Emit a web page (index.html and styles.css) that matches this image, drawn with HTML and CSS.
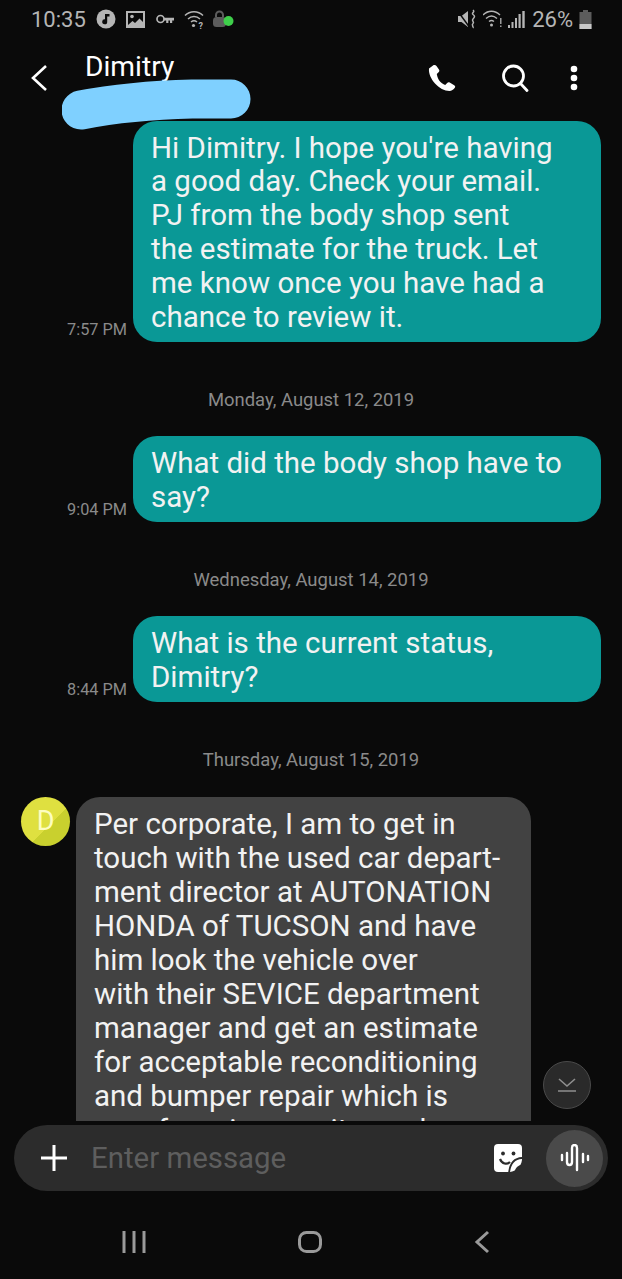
FILE: index.html
```html
<!DOCTYPE html>
<html lang="en">
  <head>
    <meta charset="UTF-8" />
    <meta name="viewport" content="width=device-width, initial-scale=1.0" />
    <title>Dimitry</title>
    <link rel="stylesheet" href="styles.css">
  </head>
  <body>
    <div class="phone">
      <div class="status-bar">
        <div class="status-left">
          <span class="clock">10:35</span>
          <svg width="20" height="20" viewBox="0 0 20 20"><circle cx="10" cy="10" r="9.500" fill="#b5b5b5"/><path d="M9 5h4.500v2.400h-2.300v5.300a2.500 2.500 0 1 1-2.200-2.400z" fill="#0a0a0a"/></svg>
          <svg width="19" height="19" viewBox="0 0 19 19"><path d="M0 1h19v17H0z" fill="#b5b5b5"/><path d="M2 3h15v9l-3.500-3.500-4.500 4.500-2.500-2L2 15z" fill="#0a0a0a"/><circle cx="6" cy="6.500" r="1.800" fill="#b5b5b5"/></svg>
          <svg class="key" width="18" height="11" viewBox="0 0 18 11"><circle cx="4.500" cy="5" r="3.500" fill="none" stroke="#b5b5b5" stroke-width="1.700"/><path d="M8 3.800h10v2.700h-1.800v2.400h-2.200V6.500h-1.600v2.400h-2.200V6.500H8z" fill="#b5b5b5"/></svg>
          <svg width="21" height="20" viewBox="0 0 21 20"><g fill="none" stroke="#b5b5b5" stroke-width="1.500"><path d="M1 6.500c5-5 13-5 18 0"/><path d="M4 10c3.400-3.200 8.600-3.200 12 0"/><path d="M7 13c1.700-1.400 4.300-1.400 6 0"/></g><circle cx="9.500" cy="16.500" r="1.600" fill="#b5b5b5"/><text x="14.500" y="19.500" class="wifi-q">?</text></svg>
          <svg class="lock" width="22" height="20" viewBox="0 0 22 20"><path d="M4 8V6a3.500 3.500 0 0 1 7 0v2" fill="none" stroke="#5c5c5c" stroke-width="2"/><rect x="1" y="8" width="13" height="10" rx="3.500" fill="#5c5c5c"/><circle cx="16.500" cy="12" r="5" fill="#3ecf4a"/></svg>
        </div>
        <div class="status-right">
          <svg width="19" height="20" viewBox="0 0 19 20"><path d="M0 7h3.500L10 2v16l-6.500-5H0z" fill="#b5b5b5"/><path d="M0 2.500l11 15" stroke="#0a0a0a" stroke-width="1.400"/><path d="M15 1c2.500 2-2 3 0 4.500s2 2.500 0 4.500 2 3 0 4.500 1 3.500 0 4.500" fill="none" stroke="#b5b5b5" stroke-width="1.500"/></svg>
          <svg width="19" height="20" viewBox="0 0 19 20"><g fill="none" stroke="#b5b5b5" stroke-width="1.400"><path d="M0 6c5-5 12-5 17 0"/><path d="M3 9.500c3.400-3 7.600-3 11 0"/><path d="M6 12.500c1.700-1.300 3.300-1.300 5 0"/></g><circle cx="8.500" cy="16" r="1.500" fill="#b5b5b5"/><path d="M17.800 9v6M17.800 16.500v1.500" stroke="#b5b5b5" stroke-width="1.300"/></svg>
          <svg width="17" height="18" viewBox="0 0 17 18"><path d="M0 15h2v3H0zM3.500 12h2v6h-2zM7 8h2v10H7zM10.500 4h2.200v14h-2.200zM14.300 1h2.400v17h-2.400z" fill="#b5b5b5"/></svg>
          <span class="battery-pct">26%</span>
          <svg width="13" height="20" viewBox="0 0 13 20"><path d="M4 1h5v2h3.500v17H.5V3H4z" fill="#5c5c5c"/><rect x=".5" y="15" width="12" height="5" fill="#c8c8c8"/></svg>
        </div>
      </div>

      <header class="app-bar">
        <svg width="18" height="28" viewBox="0 0 18 28"><path d="M16 2L3 14l13 12" fill="none" stroke="#fff" stroke-width="2.600"/></svg>
        <span class="contact-name">Dimitry</span>
        <svg class="scribble" width="190" height="56" viewBox="0 0 190 56"><path d="M19 34C50 28 90 24 130 23L169 23" fill="none" stroke="#7fd0ff" stroke-width="39" stroke-linecap="round"/></svg>
        <div class="app-actions">
          <svg width="28" height="28" viewBox="0 0 28 28"><path d="M5 1.500L1 4.500c-.5 5 2 10.500 6 15s9.500 7.500 14.500 7.500c2 0 4-1.500 5.500-3.500.5-1 0-1.800-.8-2.300l-4.500-2.700c-1-.5-1.800-.3-2.500.4l-2 2c-2-.5-4.500-2.500-6-4.500S9 11.500 8.800 10l2-2c.6-.7.7-1.500.3-2.300L8.500 2c-.8-1-2.300-1.300-3.500-.5z" fill="#fff"/></svg>
          <svg width="28" height="28" viewBox="0 0 28 28"><circle cx="12.500" cy="12" r="10" fill="none" stroke="#fff" stroke-width="2.800"/><path d="M19.500 19.500L26 26.500" stroke="#fff" stroke-width="2.800" stroke-linecap="round"/></svg>
          <svg class="more" width="8" height="26" viewBox="0 0 8 26"><circle cx="4" cy="4" r="3.300" fill="#fff"/><circle cx="4" cy="13" r="3.300" fill="#fff"/><circle cx="4" cy="22" r="3.300" fill="#fff"/></svg>
        </div>
      </header>

      <main class="chat">
        <div class="msg-out">
          <span class="msg-time">7:57 PM</span>
          <div class="bubble bubble-out">Hi Dimitry. I hope you're having<br>a good day. Check your email.<br>PJ from the body shop sent<br>the estimate for the truck. Let<br>me know once you have had a<br>chance to review it.</div>
        </div>
        <div class="date-sep">Monday, August 12, 2019</div>
        <div class="msg-out">
          <span class="msg-time">9:04 PM</span>
          <div class="bubble bubble-out">What did the body shop have to<br>say?</div>
        </div>
        <div class="date-sep">Wednesday, August 14, 2019</div>
        <div class="msg-out">
          <span class="msg-time">8:44 PM</span>
          <div class="bubble bubble-out">What is the current status,<br>Dimitry?</div>
        </div>
        <div class="date-sep">Thursday, August 15, 2019</div>
        <div class="msg-in">
          <div class="avatar">D</div>
          <div class="bubble bubble-in">Per corporate, I am to get in<br>touch with the used car depart-<br>ment director at AUTONATION<br>HONDA of TUCSON and have<br>him look the vehicle over<br>with their SEVICE department<br>manager and get an estimate<br>for acceptable reconditioning<br>and bumper repair which is<br>unsafe as is once it can do</div>
        </div>
        <button class="to-bottom">
          <svg width="20" height="14" viewBox="0 0 20 14"><path d="M2 1l8 7 8-7M1 13h18" fill="none" stroke="#8f8f8f" stroke-width="1.600"/></svg>
        </button>
      </main>

      <div class="composer">
        <svg width="28" height="28" viewBox="0 0 28 28"><path d="M14 1v26M1 14h26" stroke="#fff" stroke-width="3"/></svg>
        <span class="placeholder">Enter message</span>
        <svg class="sticker" width="28" height="28" viewBox="0 0 28 28"><path d="M4 0h20a4 4 0 0 1 4 4v12c-1 7-6 11-12 12H4a4 4 0 0 1-4-4V4a4 4 0 0 1 4-4z" fill="#fff"/><circle cx="9" cy="9.500" r="1.900" fill="#2c2c2c"/><circle cx="19.500" cy="9.500" r="1.900" fill="#2c2c2c"/><path d="M6 15c2 5 7 6 10 3" fill="none" stroke="#2c2c2c" stroke-width="2.200"/><path d="M29 14c-8 0-13 5-14 15M29 21c-4 1-7 3-8 8" fill="none" stroke="#2c2c2c" stroke-width="1.800"/></svg>
        <div class="voice-btn">
          <svg width="30" height="28" viewBox="0 0 30 28"><path d="M2 11v5M7 9v9c0 4 5 4 5 0V4c0-4 5-4 5 0v22M23 10v8M28 12v4" fill="none" stroke="#fff" stroke-width="2.400" stroke-linecap="round"/></svg>
        </div>
      </div>

      <nav class="nav-bar">
        <svg width="24" height="22" viewBox="0 0 24 22"><path d="M2 0v22M12 0v22M22 0v22" stroke="#9a9a9a" stroke-width="3"/></svg>
        <svg width="24" height="22" viewBox="0 0 24 22"><rect x="1.500" y="1.500" width="21" height="19" rx="7" fill="none" stroke="#9a9a9a" stroke-width="3"/></svg>
        <svg width="16" height="24" viewBox="0 0 16 24"><path d="M14 2L3 12l11 10" fill="none" stroke="#9a9a9a" stroke-width="3"/></svg>
      </nav>
    </div>
  </body>
</html>
```
FILE: styles.css
```css
* {
  box-sizing: border-box;
}

body {
  margin: 0;
  background: #0a0a0a;
  font-family: Roboto, "Liberation Sans", sans-serif;
}

.phone {
  position: relative;
  width: 622px;
  height: 1279px;
  overflow: hidden;
  display: flex;
  flex-direction: column;
}

.status-bar {
  height: 38px;
  padding: 0 30px 0 31px;
  display: flex;
  justify-content: space-between;
  align-items: center;
  color: #b5b5b5;
  font-size: 22px;
}

.status-left,
.status-right {
  display: flex;
  align-items: center;
}

.status-left {
  gap: 10px;
}

.status-right {
  gap: 6px;
}

.key {
  margin-left: 1px;
}

.lock {
  margin-left: -3px;
}

.wifi-q {
  font-size: 9px;
  font-weight: bold;
  fill: #b5b5b5;
}

.battery-pct {
  margin: 0 0 0 1px;
}

.app-bar {
  position: relative;
  height: 83px;
  display: flex;
  align-items: center;
  padding: 0 44px 3px 30px;
}

.contact-name {
  position: absolute;
  left: 85px;
  top: 12px;
  color: #fff;
  font-size: 28.2px;
}

/* the hand-drawn blob hiding the number under the name */
.scribble {
  position: absolute;
  left: 62px;
  top: 38px;
}

.app-actions {
  margin-left: auto;
  display: flex;
  align-items: center;
  gap: 45px;
}

.more {
  margin-left: -4px;
}

.chat {
  position: relative;
  height: 1000px;
  overflow: hidden;
  flex: none;
}

.msg-out {
  display: flex;
  justify-content: flex-end;
  align-items: flex-end;
  gap: 6px;
  padding-right: 21px;
}

.msg-time {
  color: #8a8a8a;
  font-size: 16.3px;
  padding-bottom: 3px;
}

.bubble {
  font-size: 29.5px;
  line-height: 33.9px;
  color: #f2f2f2;
  border-radius: 24px;
}

.bubble-out {
  width: 468px;
  padding: 10.5px 18px 7.5px;
  background: #0a9896;
}

.date-sep {
  height: 94px;
  padding-top: 46px;
  text-align: center;
  color: #8a8a8a;
  font-size: 18.45px;
  line-height: 24px;
}

.msg-in {
  display: flex;
  align-items: flex-start;
  gap: 6px;
  padding: 1px 0 0 21px;
}

.avatar {
  width: 49px;
  height: 49px;
  flex: none;
  border-radius: 50%;
  background: linear-gradient(135deg, #dfe040 58%, #c9d02e 58%);
  color: #fdfdc0;
  font-size: 27px;
  line-height: 49px;
  text-align: center;
}

.bubble-in {
  width: 455px;
  padding: 10px 18px;
  background: #424242;
  line-height: 34px;
  white-space: nowrap;
}

.to-bottom {
  position: absolute;
  left: 543px;
  top: 940px;
  width: 48px;
  height: 48px;
  padding: 0;
  display: flex;
  align-items: center;
  justify-content: center;
  background: #2a2a2a;
  border: 1.5px solid #4a4a4a;
  border-radius: 50%;
}

.composer {
  position: absolute;
  left: 14px;
  top: 1125px;
  width: 594px;
  height: 66px;
  display: flex;
  align-items: center;
  padding: 0 5px 0 26px;
  background: #2c2c2c;
  border-radius: 33px;
}

.placeholder {
  margin-left: 23px;
  color: #5e5e5e;
  font-size: 29.4px;
}

.sticker {
  margin-left: auto;
}

.voice-btn {
  width: 57px;
  height: 57px;
  margin-left: 24px;
  display: flex;
  align-items: center;
  justify-content: center;
  background: #4a4a4a;
  border-radius: 50%;
}

.nav-bar {
  position: absolute;
  left: 0;
  top: 1230px;
  width: 100%;
  padding: 0 132px 0 122px;
  display: flex;
  justify-content: space-between;
  align-items: center;
}
```
